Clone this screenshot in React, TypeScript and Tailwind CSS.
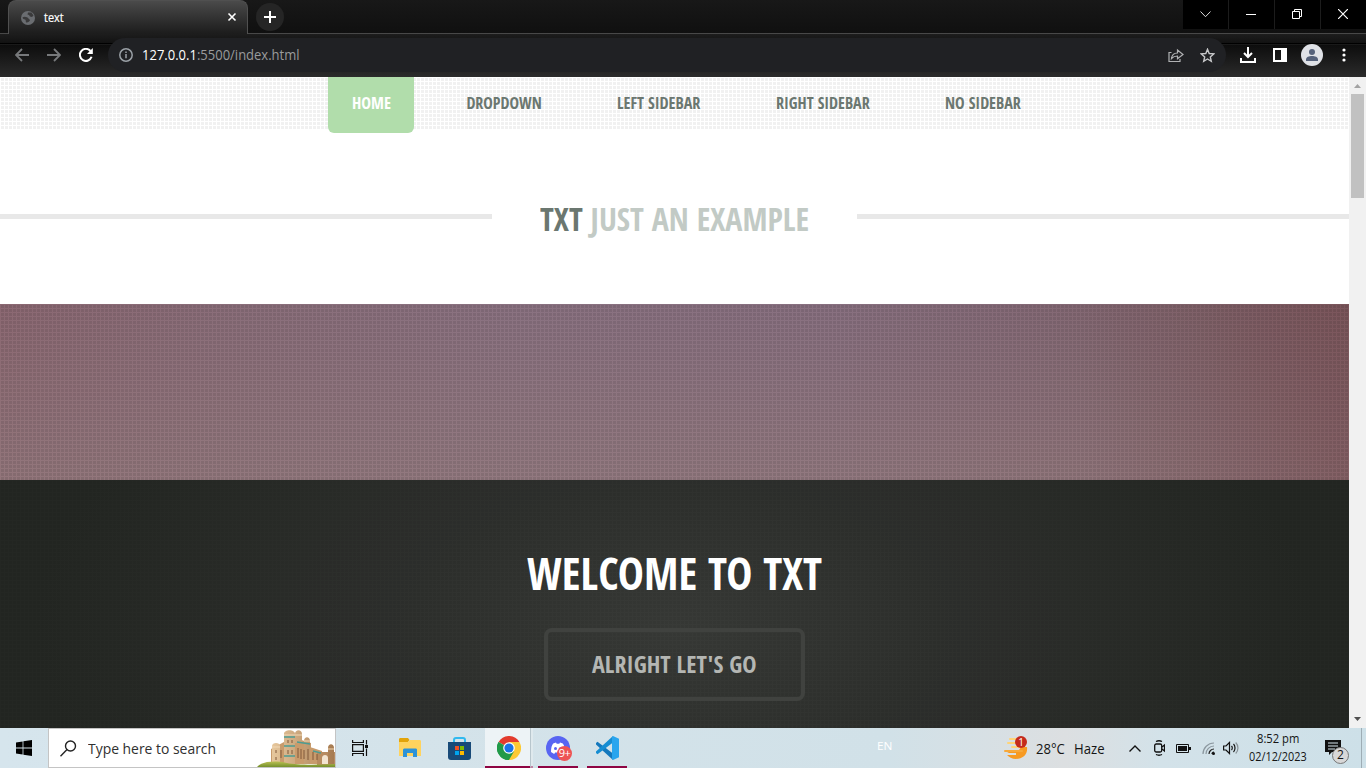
import React from "react";

const COND = "font-['Open_Sans_Condensed','Open_Sans',sans-serif] [font-stretch:75%] font-bold uppercase whitespace-nowrap leading-none";
const UI = "font-['Open_Sans','Noto_Sans',sans-serif]";

function Label({ w, className, children }: { w: number; className: string; children: React.ReactNode }) {
  const ref = React.useRef<HTMLSpanElement>(null);
  const [k, setK] = React.useState(1);
  React.useLayoutEffect(() => {
    if (ref.current) setK(w / ref.current.offsetWidth);
  }, [w]);
  return (
    <span className="inline-flex justify-start" style={{ width: w }}>
      <span ref={ref} className={`inline-block shrink-0 origin-left whitespace-nowrap ${className}`} style={{ transform: `scaleX(${k})` }}>
        {children}
      </span>
    </span>
  );
}

function TabStrip() {
  return (
    <div className="flex h-[34px] items-start border-b border-[#484848] bg-linear-to-b from-[#181818] to-[#101010]">
      <div className="ml-2 flex h-[34px] w-[240px] shrink-0 items-center rounded-t-lg border-x border-t border-[#505050] bg-linear-to-b from-[#4b4b4b] to-[#1c1c1c] pl-3 pr-[10px]">
        <svg width="14" height="14" viewBox="0 0 14 14">
          <circle cx="7" cy="7" r="7" fill="#6a6d71" />
          <path d="M1.500 6.500C3 5 5 6 6.500 6.500S7 8 8.500 8.500 8 11 6 11.500 5.500 9 4 8.500 2 8 1.500 6.500zM7 1.500l3.500 0 2 3-1.500 1.500-2-.5L8 4 6.500 3.500z" fill="#3a3a3b" />
        </svg>
        <span className="-mt-[3px] ml-[9px] flex-1">
          <Label w={20} className={`${UI} text-xs text-white [-webkit-text-stroke:0.2px_white]`}>text</Label>
        </span>
        <svg className="-mt-px" width="10" height="10" viewBox="0 0 10 10" stroke="#fff" strokeWidth="1.600"><path d="m1.500 1.500 7 7m0-7-7 7" /></svg>
      </div>
      <div className="ml-2 mt-[3px] flex size-7 items-center justify-center rounded-full bg-[#252525]">
        <svg width="12" height="12" stroke="#fff" strokeWidth="2"><path d="M6 0v12M0 6h12" /></svg>
      </div>
      <div className="ml-auto flex h-[29px] w-[183px] bg-black">
        <div className="flex w-[46px] items-center justify-center border-r border-[#1c1c1c] pr-px"><svg width="11" height="7" fill="none" stroke="#ddd" strokeWidth="1"><path d="m.5.500 5 5.200 5-5.200" /></svg></div>
        <div className="flex w-[46px] items-center justify-center border-r border-[#1c1c1c] pr-px"><div className="h-px w-[10px] bg-white" /></div>
        <div className="flex w-[46px] items-center justify-center border-r border-[#1c1c1c] pb-px pr-px"><svg width="10" height="10" fill="none" stroke="#fff"><path d="M.5 2.500h7v7h-7zM2.500 2.500v-2h7v7h-2" /></svg></div>
        <div className="flex w-[45px] items-center justify-center pb-px pr-[2px]"><svg width="10" height="10" stroke="#fff" strokeWidth="1.200"><path d="m0 0 10 10M10 0 0 10" /></svg></div>
      </div>
    </div>
  );
}

function Toolbar() {
  return (
    <div className="flex h-[43px] items-center bg-[linear-gradient(#1d1d1d_0,#121212_9px,#000_9px,#000_10px,#262626_10px,#0d0d0d_11px,#2b2b2b_43px)] pb-px">
      <svg className="ml-[15px]" width="14" height="14" fill="none" stroke="#77797b" strokeWidth="1.800"><path d="M14 7H1.500M7 1 1 7l6 6" /></svg>
      <svg className="ml-[18px]" width="14" height="14" fill="none" stroke="#77797b" strokeWidth="1.800"><path d="M0 7h12.500M7 1l6 6-6 6" /></svg>
      <svg className="ml-[18px]" width="14" height="14" viewBox="0 0 14 14" fill="none" stroke="#fff" strokeWidth="2"><path d="M12.600 8.800A6 6 0 1 1 11.500 3" /><path d="M13.800 0v6H8z" fill="#fff" stroke="none" /></svg>
      <div className="ml-[15px] flex h-[34px] w-[1118px] items-center rounded-full bg-[#202124] pl-[11px] pr-2">
        <svg width="14" height="14" fill="none" stroke="#9aa0a6" strokeWidth="1.500"><circle cx="7" cy="7" r="6.200" /><path d="M7 6v4.300M7 3.500v1.500" /></svg>
        <span className="-mt-[3px] ml-[9px] flex-1"><Label w={158} className={`${UI} text-[14px] text-[#9a9b9c]`}><span className="text-white">127.0.0.1</span>:5500/index.html</Label></span>
        <svg width="16" height="15" viewBox="0 0 16 15" fill="none" stroke="#b0b1b3" strokeWidth="1.200"><path d="M3.500 4.500H1v9h11V11" /><path d="M3.500 10.500c.4-3.600 2.300-5.400 6-5.500V2l5.500 4.500-5.500 4.300V8c-2.800 0-4.500.8-6 2.500z" /></svg>
        <svg className="ml-4 mr-[3px]" width="15" height="15" viewBox="0 0 15 15" fill="none" stroke="#c7c8ca" strokeWidth="1.400"><path d="m7.500 1.300 1.700 4.200 4.500.4-3.400 3 1 4.400-3.800-2.300-3.800 2.300 1-4.400-3.400-3 4.500-.4z" /></svg>
      </div>
      <svg className="ml-[14px]" width="16" height="16" fill="none" stroke="#fff" strokeWidth="2"><path d="M8 0v9M4 6l4 4 4-4M1 11v4h14v-4" /></svg>
      <svg className="ml-[17px]" width="14" height="14" fill="none" stroke="#fff" strokeWidth="2"><path d="M1 1h12v12H1z" /><path d="M9 1h4v12H9z" fill="#fff" /></svg>
      <svg className="ml-[14px]" width="22" height="22" viewBox="0 0 22 22"><circle cx="11" cy="11" r="11" fill="#dfe1e6" /><circle cx="11" cy="8" r="3" fill="#55617a" /><path d="M5 17v-1.500C5 13 8 12 11 12s6 1 6 3.500V17z" fill="#55617a" /></svg>
      <svg className="ml-[19px]" width="4" height="14" fill="#fff"><circle cx="2" cy="2" r="1.600" /><circle cx="2" cy="7" r="1.600" /><circle cx="2" cy="12" r="1.600" /></svg>
    </div>
  );
}

function Site() {
  return (
    <div className="flex w-[1349px] flex-col overflow-hidden bg-white">
      <nav className="flex h-[52px] items-start bg-[conic-gradient(from_90deg_at_1px_1px,#f1f1f1_90deg,#fff_0)] bg-[length:4px_4px] pl-[328px] text-[#6b7770]">
        <div className="z-10 flex h-14 w-[86px] shrink-0 items-start rounded-b-md bg-[#b1ddab] pl-6 pt-[18px] text-white"><Label w={39} className={`${COND} text-base`}>Home</Label></div>
        <div className="ml-[52.400px] flex gap-[75.800px] pt-[18px]">
          <Label w={75} className={`${COND} text-base`}>Dropdown</Label>
          <Label w={83} className={`${COND} text-base`}>Left Sidebar</Label>
          <Label w={93.5} className={`${COND} text-base`}>Right Sidebar</Label>
          <Label w={75.5} className={`${COND} text-base`}>No Sidebar</Label>
        </div>
      </nav>
      <header className="flex h-[175px] items-start pt-[74px]">
        <div className="mt-[11px] h-[5px] w-[492px] bg-[#e8e8e8]" />
        <h1 className="flex w-[365px] justify-center pl-px"><Label w={269.5} className={`${COND} text-[32px] text-[#c2cac5]`}><span className="text-[#6b7770]">Txt</span> Just an example</Label></h1>
        <div className="mt-[11px] h-[5px] flex-1 bg-[#e8e8e8]" />
      </header>
      <section className="h-44 bg-[conic-gradient(from_90deg_at_1px_1px,#00000018_90deg,transparent_0),linear-gradient(90deg,transparent_80%,#7a505680),linear-gradient(#93797c00,#967c7fb0),linear-gradient(90deg,#8b6872,#8a6e7a_18%,#8a7281_38%,#887080_62%,#856a77_75%,#80656d_89%,#7b5a60)] bg-[length:4px_4px,100%_100%,100%_100%,100%_100%]" />
      <section className="flex h-[248px] flex-col items-center bg-[conic-gradient(from_90deg_at_1px_1px,#0000000e_90deg,transparent_0),radial-gradient(ellipse_640px_340px_at_50%_60%,#393b38,#2e302d_45%,#242723)] bg-[length:4px_4px,100%_100%] pt-[71px]">
        <h2 className="flex pl-px"><Label w={295.5} className={`${COND} text-[44px] text-white`}>Welcome to TXT</Label></h2>
        <button className="mt-[33px] flex h-[73px] w-[261px] items-start justify-center rounded-lg border-4 border-[#40423f] pt-5"><Label w={165} className={`${COND} text-2xl text-[#b4b6b3]`}>Alright let's go</Label></button>
      </section>
    </div>
  );
}

function Scrollbar() {
  return (
    <div className="flex w-[17px] flex-col items-center justify-between bg-[#f1f1f1]">
      <div className="flex flex-col items-center">
        <svg width="17" height="17" fill="#a3a3a3"><path d="m5 11 3.500-4 3.500 4z" /></svg>
        <div className="h-[104px] w-[13px] bg-[#c1c1c1]" />
      </div>
      <svg width="17" height="17" fill="#505050"><path d="m5 6 3.500 4L12 6z" /></svg>
    </div>
  );
}

function Castle() {
  return (
    <svg width="78" height="38" viewBox="0 0 78 38">
      <defs>
        <linearGradient id="stone"><stop offset="0" stopColor="#e6c79d" /><stop offset="1" stopColor="#a67a50" /></linearGradient>
        <linearGradient id="grass" x2="0" y2="1"><stop offset="0" stopColor="#b9bf52" /><stop offset="1" stopColor="#74902c" /></linearGradient>
      </defs>
      <path d="M14 20l13-7v22H14zM38 9l16 5v21H38zM53 18l12 4v13H53z" fill="#c89b6c" />
      <path d="M60 23h18v13H60z" fill="#b78b60" />
      <path d="M15 17c0-4 8-4 8 0v18h-8zM27 5c0-5 11-5 11 0v30H27zM38 5c0-5 7-5 7 0v9h-7zM47 12c0-5 6-5 6 0v23h-6zM71 19c0-5 6-5 6 0v16h-6z" fill="url(#stone)" />
      <path d="M65 35v-6c0-4 6-4 6 0v6z" fill="#f3e4d0" />
      <path d="M27 8h11M27 17h11M27 27h11M40 13l13 2M56 22l8 2" stroke="#4c9c92" strokeWidth="1.300" />
      <path d="M41 19v10m3-9v10m3-9v9m4-10v11m5-8v8m4-6v6M31 11v3m4-3v3M31 21v4m4-4v4M19 21v3m0 4v3m5-10v8" stroke="#80583a" strokeWidth="1" />
      <path d="M15 18h8M27 6h11M38 6h7M47 12h6M71 20h6" stroke="#f2d9b6" />
      <path d="M0 38c4-5 16-7 30-4 10 2 28 2 48 1v3z" fill="url(#grass)" />
    </svg>
  );
}

function Taskbar() {
  return (
    <footer className="flex h-10 items-stretch bg-[linear-gradient(90deg,#d6e5ed,#d4e3ea_30%,#d1e1e8_65%,#dcdfe1_78%,#d3e2e9_85%,#cde0e8)] text-[#151515]">
      <div className="flex w-12 items-center justify-center"><svg width="16" height="16"><path d="M0 2.400 6.600 1.400v6.200H0zM7.400 1.300 16 0v7.600H7.400zM0 8.400h6.600v6.200L0 13.600zM7.400 8.400H16V16l-8.600-1.300z" /></svg></div>
      <div className="flex w-[288px] items-center border border-[#c4c4c4] bg-white pl-[11px]">
        <svg width="17" height="17" fill="none" stroke="#222" strokeWidth="1.400"><circle cx="10.500" cy="6" r="5" /><path d="m7 9.600-6.500 6.600" /></svg>
        <span className="ml-[11px] flex-1"><Label w={128} className={`${UI} text-[15px] text-[#303030]`}>Type here to search</Label></span>
        <Castle />
      </div>
      <div className="flex w-12 items-center justify-center"><svg width="17" height="16" fill="none" stroke="#111" strokeWidth="1.200"><path d="M.6 0v2.500h10.800V0M.6 16v-2.500h10.800V16M.6 4.600h10.800v6.800H.6zM14.500 0v4.500M14.500 8.500V16" /><path d="M13 5h3v3h-3z" fill="#111" stroke="none" /></svg></div>
      <div className="flex w-[50px] items-center justify-center pl-px"><svg width="22" height="20"><path d="M0 1.500C0 .5.500 0 1.500 0H9l1.500 2-1.500 2H0z" fill="#e3a40a" /><path d="M0 4h9l2-2h9.500c1 0 1.500.5 1.500 1.500V18H0z" fill="#ffd35e" /><path d="M4 19v-7c0-1 .8-1.500 1.500-1.500h11c1 0 1.500.5 1.500 1.500v7h-4v-4H8v4z" fill="#2d93d8" /></svg></div>
      <div className="flex w-[51px] items-center justify-center"><svg width="23" height="23"><path d="M6 6V3c0-1.500.5-2 2-2h7c1.500 0 2 .5 2 2v3" fill="none" stroke="#30b9ef" strokeWidth="2" /><path d="M0 5h23v15c0 2-1 3-3 3H3c-2 0-3-1-3-3z" fill="#184a78" /><path d="M7 9h4v4H7z" fill="#f25022" /><path d="M12 9h4v4h-4z" fill="#7fba00" /><path d="M7 14h4v4H7z" fill="#00a4ef" /><path d="M12 14h4v4h-4z" fill="#ffb900" /></svg></div>
      <div className="flex w-[45px] items-center justify-center border-b-2 border-[#8e0543] bg-[#edf3f6] pl-[3px] pt-[2px]">
        <svg width="24" height="24" viewBox="0 0 24 24"><path d="M12 12 1.600 6A12 12 0 0 1 22.400 6z" fill="#e33b2e" /><path d="M12 12 22.400 6A12 12 0 0 1 12 24z" fill="#fcc934" /><path d="M12 12v12A12 12 0 0 1 1.600 6z" fill="#229a49" /><path d="M12 6h10.400L17.200 15 12 24l-.1-7z" fill="#fcc934" /><path d="M1.600 6 7 15l5 2.500 5.200-2.500L12 24A12 12 0 0 1 1.600 6z" fill="#229a49" /><circle cx="12" cy="12" r="5.800" fill="#fff" /><circle cx="12" cy="12" r="4.600" fill="#1a73e8" /></svg>
      </div>
      <div className="w-[3px] border-b-2 border-l border-b-[#c083a3] border-l-[#b8c6cd] bg-[#dfe9ed]" />
      <div className="ml-[5px] flex w-10 items-center justify-center border-b-2 border-[#8e0543] pt-[2px]">
        <div className="relative size-6">
          <svg width="24" height="24" viewBox="0 0 24 24"><circle cx="12" cy="12" r="12" fill="#5865f2" /><path d="M5 16c0-4 .8-7 2.200-8.500L10 6.500l.7 1.200h2.600l.7-1.200 2.800 1C18.200 9 19 12 19 16l-3.200 2-.9-1.500H9.100L8.200 18z" fill="#fff" /><circle cx="9.500" cy="12.500" r="1.500" fill="#5865f2" /><circle cx="14.500" cy="12.500" r="1.500" fill="#5865f2" /></svg>
          <span className={`absolute left-[11px] top-[10px] flex size-[15px] items-center justify-center rounded-full bg-[#ee5354] pb-[2px] text-[11px] leading-none tracking-tighter text-white ${UI}`}>9+</span>
        </div>
      </div>
      <div className="ml-[9px] flex w-10 items-center justify-center border-b-2 border-[#8e0543] pt-[2px]"><svg width="24" height="24" viewBox="0 0 24 24"><path d="m1 7 1.500-1.200L18 17.500V24L1 8.500z" fill="#1478bd" /><path d="m1 17 1.500 1.200L18 6.500V0L1 15.500z" fill="#168dd2" /><path d="m18 0 6 2.700v18.600L18 24l-1-1V1z" fill="#29a5ee" /></svg></div>

      <div className="ml-[250px] flex w-[20px] pt-[12px]"><Label w={15} className={`${UI} text-[11px] leading-none text-white`}>EN</Label></div>
      <div className="relative ml-[107px] flex w-8 items-center">
        <svg width="24" height="24" viewBox="0 0 24 24"><path d="M9 14h6l2-3h6c1 7-4 12-11 12-4 0-7-2-9-4h9v-2H3z" fill="#f79a22" /><path d="M6 3h6M4 7h8M8 11h8" stroke="#ffd477" strokeWidth="2" strokeLinecap="round" /><path d="M1 15h17" stroke="#f7a83a" strokeWidth="2" strokeLinecap="round" /></svg>
        <span className={`absolute left-[11px] top-[8px] flex size-3 items-center justify-center rounded-full bg-[#c42b1c] text-[10px] leading-none text-white ${UI}`}>1</span>
      </div>
      <div className="flex items-center gap-[9px]"><Label w={29} className={`${UI} text-[14px]`}>28°C</Label><Label w={31} className={`${UI} text-[14px]`}>Haze</Label></div>
      <div className="ml-6 flex items-center">
        <svg width="12" height="7" fill="none" stroke="#111" strokeWidth="1.400"><path d="m.5 6.500 5.500-5.500 5.500 5.500" /></svg>
        <svg className="ml-[13px]" width="11" height="16" fill="none" stroke="#111" strokeWidth="1.300"><rect x=".7" y="4" width="7" height="8" rx="1.500" /><path d="m8 7 2.500-2v6L8 9M2 1.500c2-1 4-1 6 0M2 14.500c2 1 4 1 6 0" /></svg>
        <svg className="ml-[11px]" width="15" height="9"><path d="M.5.500h12v8H.5z" fill="none" stroke="#111" /><path d="M2 2h9v5H2zM13 3h2v3h-2z" fill="#111" /></svg>
        <svg className="ml-[11px]" width="13" height="13" fill="none" stroke="#8c989f" strokeWidth="1.200"><path d="M1 12A11 11 0 0 1 12 1M4 12a8 8 0 0 1 8-8" /><path d="M7 12a5 5 0 0 1 5-5M10 12a2 2 0 0 1 2-2" stroke="#222" /><circle cx="11.500" cy="11.500" r="1.500" fill="#111" stroke="none" /></svg>
        <svg className="ml-2" width="16" height="14" fill="none" stroke="#111" strokeWidth="1.200"><path d="M.6 5v4H3l3.500 3.500v-11L3 5zM8.500 5c1 1 1 3 0 4M10.500 3c2 2 2 6 0 8" /><path d="M12.700 1.500c3 3 3 8 0 11" stroke="#8a9398" /></svg>
      </div>
      <div className="ml-[9px] flex w-[60px] flex-col items-center justify-center gap-[6px]">
        <Label w={42} className={`${UI} text-[12px] leading-none`}>8:52 pm</Label>
        <Label w={58} className={`${UI} text-[12px] leading-none`}>02/12/2023</Label>
      </div>
      <div className="relative ml-[17px] w-[37px] border-r border-[#9eadb5] pt-3">
        <svg width="16" height="15"><path d="M0 0h16v12H7l-3 3v-3H0z" fill="#111" /><path d="M3 3h10M3 6h10M3 9h7" stroke="#d5e3ea" /></svg>
        <span className={`absolute left-[7px] top-[19px] flex size-[17px] items-center justify-center rounded-full border border-[#777] bg-[#d8d8d8] pb-px text-[12px] leading-none ${UI}`}>2</span>
      </div>
    </footer>
  );
}

export default function App() {
  return (
    <div className="flex h-[768px] w-[1366px] flex-col overflow-hidden bg-white">
      <TabStrip />
      <Toolbar />
      <main className="flex h-[651px] justify-between"><Site /><Scrollbar /></main>
      <Taskbar />
    </div>
  );
}
